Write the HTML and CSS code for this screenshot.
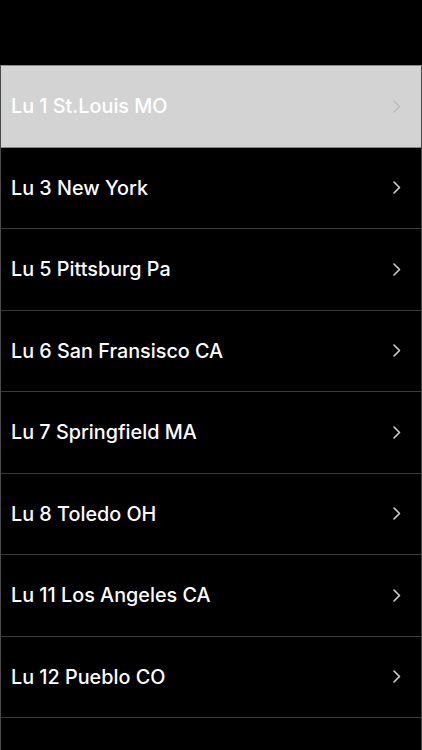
FILE: index.html
```html
<!DOCTYPE html>
<html lang="en">
<head>
    <meta charset="UTF-8">
    <meta name="viewport" content="width=device-width, initial-scale=1.0">
    <title>Locals</title>
    <link rel="stylesheet" href="styles.css">
</head>
<body>
    <div class="topbar"></div>
    <ul class="list">
        <li class="row selected"><span class="name">Lu 1 St.Louis MO</span><svg class="chev" viewBox="0 0 8 13"><path d="M1 1l5.5 5.5L1 12"/></svg></li>
        <li class="row"><span class="name">Lu 3 New York</span><svg class="chev" viewBox="0 0 8 13"><path d="M1 1l5.5 5.5L1 12"/></svg></li>
        <li class="row"><span class="name">Lu 5 Pittsburg Pa</span><svg class="chev" viewBox="0 0 8 13"><path d="M1 1l5.5 5.5L1 12"/></svg></li>
        <li class="row"><span class="name">Lu 6 San Fransisco CA</span><svg class="chev" viewBox="0 0 8 13"><path d="M1 1l5.5 5.5L1 12"/></svg></li>
        <li class="row"><span class="name">Lu 7 Springfield MA</span><svg class="chev" viewBox="0 0 8 13"><path d="M1 1l5.5 5.5L1 12"/></svg></li>
        <li class="row"><span class="name">Lu 8 Toledo OH</span><svg class="chev" viewBox="0 0 8 13"><path d="M1 1l5.5 5.5L1 12"/></svg></li>
        <li class="row"><span class="name">Lu 11 Los Angeles CA</span><svg class="chev" viewBox="0 0 8 13"><path d="M1 1l5.5 5.5L1 12"/></svg></li>
        <li class="row"><span class="name">Lu 12 Pueblo CO</span><svg class="chev" viewBox="0 0 8 13"><path d="M1 1l5.5 5.5L1 12"/></svg></li>
        <li class="row empty"></li>
    </ul>
</body>
</html>
```

FILE: styles.css
```css
*{
    margin: 0;
    padding: 0;
    list-style: none;
    box-sizing: border-box;
}
html,body{
    height: 100%;
    overflow: hidden;
}
body{
    background-color: #000;
    font-family: Inter, Roboto, "Liberation Sans", sans-serif;
}
.topbar{
    height: 65px;
    background-color: #000;
}
.list{
    border-top: 1px solid #8a8a8a;
    border-left: 1px solid #4a4a4a;
    border-right: 1px solid #4a4a4a;
}
.row{
    display: flex;
    align-items: center;
    justify-content: space-between;
    height: 81.5px;
    padding: 0 20px 0 10px;
    border-bottom: 1px solid #3a3a3a;
    background-color: #000;
}
.row .name{
    color: #fff;
    font-size: 19.8px;
    font-weight: 500;
}
.row .chev{
    width: 8px;
    height: 13px;
    fill: none;
    stroke: #cfcfcf;
    stroke-width: 1.6;
    stroke-linecap: round;
    stroke-linejoin: round;
}
.selected{
    background-color: #d3d3d3;
    border-bottom-color: #888;
}
.selected .chev{
    stroke: #bdbdbd;
}
.empty{
    height: 40px;
}
```
